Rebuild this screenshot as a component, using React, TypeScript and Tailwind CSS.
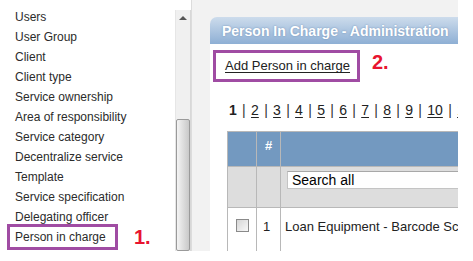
import React from 'react'

const menu = [
    'Users',
    'User Group',
    'Client',
    'Client type',
    'Service ownership',
    'Area of responsibility',
    'Service category',
    'Decentralize service',
    'Template',
    'Service specification',
    'Delegating officer',
    'Person in charge',
]

const pages = ['2', '3', '4', '5', '6', '7', '8', '9', '10', '1']

function Sidebar() {
    return (
        <div className="flex w-[191px] h-[251px] shrink-0">
            <div className="relative w-[175px] bg-white pt-[7px]">
                {menu.map((m) => (
                    <div key={m} className="h-5 leading-5 pl-[15px] text-[12px] text-[#2b2b2b]">{m}</div>
                ))}

                {/* annotation 1 */}
                <div className="absolute left-[7px] top-[224px] w-[111px] h-[26px] border-[3px] border-[#a04ca3]"></div>
                <div className="absolute left-[134px] top-[226px] text-[20px] font-bold leading-[22px] text-[#e8142f]">1.</div>
            </div>

            {/* scrollbar */}
            <div className="mt-[10px] w-[16px] h-[241px] flex flex-col bg-[#f0f0f0] border-l border-[#e6e6e6] border-r border-r-[#d8d8d8]">
                <div className="h-[109px] flex justify-center pt-[6px]">
                    <div className="w-0 h-0 border-l-[4px] border-r-[4px] border-b-[4px] border-l-transparent border-r-transparent border-b-[#555]"></div>
                </div>
                <div className="flex-1 rounded-[2px] border border-[#9a9a9a] bg-gradient-to-r from-[#f4f4f4] via-[#dedede] to-[#c9c9c9]"></div>
            </div>
        </div>
    )
}

function Panel() {
    return (
        <div className="w-[300px] h-[234px] flex flex-col">
            <div className="h-[27px] shrink-0 rounded-tl-[7px] bg-gradient-to-b from-[#cddcec] to-[#8eafd4] pl-[12px] leading-[28px] text-[14px] font-bold text-white whitespace-nowrap [text-shadow:0_0_2px_#6f8fb5]">
                Person In Charge - Administration
            </div>

            <div className="relative flex-1 bg-white">
                <div className="ml-[3px] mt-[6px] w-[147px] h-[32px] border-[3px] border-[#a04ca3] pl-[9px] flex items-center">
                    <span className="text-[13px] text-[#222] underline underline-offset-2">Add Person in charge</span>
                </div>
                <div className="absolute left-[162px] top-[7px] text-[20px] font-bold leading-[22px] text-[#e8142f]">2.</div>

                {/* pager */}
                <div className="mt-[19px] ml-[19px] flex items-center gap-[5.3px] text-[14px] leading-[18px] text-[#222]">
                    <span className="font-bold">1</span>
                    {pages.map((p, i) => (
                        <React.Fragment key={i}>
                            <span className="text-[#333]">|</span>
                            <span className="underline underline-offset-2">{p}</span>
                        </React.Fragment>
                    ))}
                </div>

                {/* table */}
                <table className="ml-[17px] mt-[12px] w-[300px] table-fixed border-collapse text-[13px] text-[#222]">
                    <colgroup>
                        <col className="w-[29px]" />
                        <col className="w-[24px]" />
                        <col />
                    </colgroup>
                    <tbody>
                        <tr className="h-[35px] bg-[#7399c0]">
                            <td className="border border-[#b8b8b8]"></td>
                            <td className="border border-[#b8b8b8] align-top pt-[4px] text-center text-white font-bold">#</td>
                            <td className="border border-[#b8b8b8]"></td>
                        </tr>
                        <tr className="h-[41px] bg-[#dddddd]">
                            <td className="border border-[#b8b8b8]"></td>
                            <td className="border border-[#b8b8b8]"></td>
                            <td className="border border-[#b8b8b8] align-top pt-[4px] pl-[6px]">
                                <div className="h-[18px] w-[250px] bg-white border border-[#c4c4c4] border-t-[#a8a8a8] pl-[4px] leading-[16px] text-[14px] text-black">Search all</div>
                            </td>
                        </tr>
                        <tr className="h-[44px] bg-white">
                            <td className="border border-[#b8b8b8] align-top pt-[11px]">
                                <div className="ml-[8px] w-[13px] h-[13px] border border-[#8a8a8a] bg-gradient-to-br from-[#d6d6d6] to-[#f8f8f8]"></div>
                            </td>
                            <td className="border border-[#b8b8b8] align-top pt-[9px] pl-[6px]">1</td>
                            <td className="border border-[#b8b8b8] align-top pt-[9px] pl-[4px] whitespace-nowrap overflow-hidden">Loan Equipment - Barcode Scanner</td>
                        </tr>
                    </tbody>
                </table>
            </div>
        </div>
    )
}

export default function App() {
    return (
        <div className="w-[473px] h-[261px] bg-white overflow-hidden flex font-['Liberation_Sans',Arial,sans-serif]">
            <Sidebar />
            <div className="w-[267px] h-[251px] shrink-0 overflow-hidden bg-[#f2f2f2] pl-[18px] pt-[17px] border-l border-[#dcdcdc]">
                <Panel />
            </div>
        </div>
    )
}
